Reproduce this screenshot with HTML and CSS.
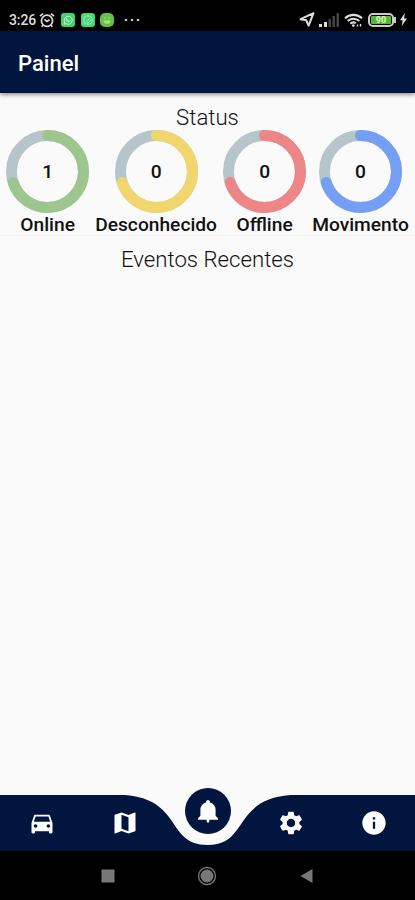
FILE: index.html
```html
<!DOCTYPE html>
<html lang="pt-BR">
<head>
<meta charset="UTF-8">
<meta name="viewport" content="width=device-width, initial-scale=1.0">
<title>Painel</title>
<link rel="stylesheet" href="styles.css">
</head>
<body>
<div class="status-bar">
    <div class="status-left">
        <span class="clock">3:26</span>
        <svg class="alarm" viewBox="0 0 16 16" fill="none" stroke="#ddd" stroke-width="1.7">
            <circle cx="8" cy="8.8" r="5.6"/>
            <path d="M1 4.2 4 1.6M15 4.2 12 1.6M5.5 7.3 8 9.5l2.6-1.7M4 13.2l-1.3 1.5M12 13.2l1.3 1.5"/>
        </svg>
        <svg class="app-icon" viewBox="0 0 14 14">
            <rect width="14" height="14" rx="3" fill="#43d36b"/>
            <path d="M3 11.2 3.6 9A4 4 0 1 1 5 10.6z" fill="none" stroke="#c9f5d4"/>
            <path d="M5.4 5c0 2 1.5 3.5 3.5 3.6" fill="none" stroke="#c9f5d4" stroke-width="1.3"/>
        </svg>
        <svg class="app-icon" viewBox="0 0 14 14">
            <rect width="14" height="14" rx="3" fill="#48d873"/>
            <rect x="3" y="3" width="8" height="8" rx="2.5" fill="none" stroke="#a5efba"/>
            <path d="M5 9.2 9.2 4.8M6 10.5 10 7" stroke="#a5efba"/>
        </svg>
        <svg class="app-icon" viewBox="0 0 14 14">
            <rect width="14" height="14" rx="5" fill="#62c043"/>
            <path d="M3.5 7.5h7a3.5 3.3 0 0 1-7 0z" fill="#a9df94"/>
            <path d="M5 3.8v2.4M9 3.8v2.4M7 7.5v3" stroke="#a9df94"/>
        </svg>
        <svg class="more" viewBox="0 0 16 4" fill="#c4c4c4">
            <circle cx="2" cy="2" r="1.3"/><circle cx="8" cy="2" r="1.3"/><circle cx="14" cy="2" r="1.3"/>
        </svg>
    </div>
    <div class="status-right">
        <svg class="location" viewBox="0 0 16 15" fill="none" stroke="#ddd" stroke-width="2" stroke-linejoin="round">
            <path d="M14.5 1.2 1.5 7.2 7.3 8.3 9.6 13.6z"/>
        </svg>
        <svg class="signal" viewBox="0 0 20 14">
            <path d="M0 11h3v3H0zM5 9h3v5H5z" fill="#ddd"/>
            <path d="M9.5 6H12v8H9.5zM13.5 3H16v11h-2.5zM17.5 0H20v14h-2.5z" fill="#444"/>
        </svg>
        <svg class="wifi" viewBox="0 0 19 14" fill="none" stroke="#ddd" stroke-width="2.1">
            <path d="M1 5.2a12.5 12.5 0 0 1 17 0M3.7 8a8.5 8.5 0 0 1 11.6 0M6.3 10.6a4.6 4.6 0 0 1 5.5-.5"/>
            <circle cx="9.3" cy="12.6" r="1.3" fill="#ddd" stroke="none"/>
            <path d="M13.5 13.5v-2M16.5 11v2.5" stroke-width="1.4"/>
        </svg>
        <div class="battery"><span>90</span></div>
        <svg class="bolt" viewBox="0 0 7 13" fill="#ddd"><path d="M4.8 0 0 7.2h2.6L1.8 13 7 5.4H4.2z"/></svg>
    </div>
</div>

<header class="app-bar">
    <h1>Painel</h1>
</header>

<main class="content">
    <section class="status">
        <h2>Status</h2>
        <div class="gauges">
            <div class="gauge online">
                <div class="dial">
                    <svg viewBox="0 0 83 83"><circle class="track" cx="41.5" cy="41.5" r="36"/><circle class="arc" cx="41.5" cy="41.5" r="36" pathLength="100"/></svg>
                    <span>1</span>
                </div>
                <div class="label">Online</div>
            </div>
            <div class="gauge unknown">
                <div class="dial">
                    <svg viewBox="0 0 83 83"><circle class="track" cx="41.5" cy="41.5" r="36"/><circle class="arc" cx="41.5" cy="41.5" r="36" pathLength="100"/></svg>
                    <span>0</span>
                </div>
                <div class="label">Desconhecido</div>
            </div>
            <div class="gauge offline">
                <div class="dial">
                    <svg viewBox="0 0 83 83"><circle class="track" cx="41.5" cy="41.5" r="36"/><circle class="arc" cx="41.5" cy="41.5" r="36" pathLength="100"/></svg>
                    <span>0</span>
                </div>
                <div class="label">Offline</div>
            </div>
            <div class="gauge moving">
                <div class="dial">
                    <svg viewBox="0 0 83 83"><circle class="track" cx="41.5" cy="41.5" r="36"/><circle class="arc" cx="41.5" cy="41.5" r="36" pathLength="100"/></svg>
                    <span>0</span>
                </div>
                <div class="label">Movimento</div>
            </div>
        </div>
    </section>
    <section class="events">
        <h2>Eventos Recentes</h2>
    </section>
</main>

<nav class="tab-bar">
    <!-- bar with the notch under the active tab -->
    <svg class="tab-shape" viewBox="0 0 415 56">
        <path d="M0 0H124.5C182.6 4.2 166 50 207.5 50S232.4 4.2 290.5 0H415V56H0z" fill="#01153e"/>
    </svg>
    <a class="tab"><svg viewBox="0 0 24 24"><path d="M18.92 6.01C18.72 5.42 18.16 5 17.5 5h-11c-.66 0-1.21.42-1.42 1.01L3 12v8c0 .55.45 1 1 1h1c.55 0 1-.45 1-1v-1h12v1c0 .55.45 1 1 1h1c.55 0 1-.45 1-1v-8l-2.08-5.99zM6.5 16c-.83 0-1.5-.67-1.5-1.5S5.67 13 6.5 13s1.5.67 1.5 1.5S7.33 16 6.5 16zm11 0c-.83 0-1.5-.67-1.5-1.5s.67-1.5 1.5-1.5 1.5.67 1.5 1.5-.67 1.5-1.5 1.5zM5 11l1.5-4.5h11L19 11H5z"/></svg></a>
    <a class="tab"><svg viewBox="0 0 24 24"><path d="M20.5 3l-.16.03L15 5.1 9 3 3.36 4.9c-.21.07-.36.25-.36.48V20.5c0 .28.22.5.5.5l.16-.03L9 18.9l6 2.1 5.64-1.9c.21-.07.36-.25.36-.48V3.5c0-.28-.22-.5-.5-.5zM15 19l-6-2.11V5l6 2.11V19z"/></svg></a>
    <a class="tab active"><span><svg viewBox="0 0 24 24"><path d="M12 22c.7 0 1.1-.6 1.1-1.5v-1h-2.2v1c0 .9.4 1.5 1.1 1.5zm6.5-6v-5c0-3.07-1.84-5.64-4.7-6.32C13.7 3.5 12.9 2.5 12 2.5s-1.7 1-1.8 2.18C7.33 5.36 5.5 7.92 5.5 11v5L3.5 18.2v1.2h17v-1.2l-2-2.2z"/></svg></span></a>
    <a class="tab"><svg viewBox="0 0 24 24"><path d="M19.14 12.94c.04-.3.06-.61.06-.94 0-.32-.02-.64-.07-.94l2.03-1.58c.18-.14.23-.41.12-.61l-1.92-3.32c-.12-.22-.37-.29-.59-.22l-2.39.96c-.5-.38-1.03-.7-1.62-.94l-.36-2.54c-.04-.24-.24-.41-.48-.41h-3.84c-.24 0-.43.17-.47.41l-.36 2.54c-.59.24-1.13.57-1.62.94l-2.39-.96c-.22-.08-.47 0-.59.22L2.74 8.87c-.12.21-.08.47.12.61l2.03 1.58c-.05.3-.09.63-.09.94s.02.64.07.94l-2.03 1.58c-.18.14-.23.41-.12.61l1.92 3.32c.12.22.37.29.59.22l2.39-.96c.5.38 1.03.7 1.62.94l.36 2.54c.05.24.24.41.48.41h3.84c.24 0 .44-.17.47-.41l.36-2.54c.59-.24 1.13-.56 1.62-.94l2.39.96c.22.08.47 0 .59-.22l1.92-3.32c.12-.22.07-.47-.12-.61l-2.01-1.58zM12 15.6c-1.98 0-3.6-1.62-3.6-3.6s1.62-3.6 3.6-3.6 3.6 1.62 3.6 3.6-1.62 3.6-3.6 3.6z"/></svg></a>
    <a class="tab"><svg viewBox="0 0 24 24"><path d="M12 2C6.48 2 2 6.48 2 12s4.48 10 10 10 10-4.48 10-10S17.52 2 12 2zm1 15h-2v-6h2v6zm0-8h-2V7h2v2z"/></svg></a>
</nav>

<div class="system-nav">
    <svg viewBox="0 0 20 20"><rect x="3.5" y="3.5" width="13" height="13" fill="#777"/></svg>
    <svg viewBox="0 0 20 20"><circle cx="10" cy="10" r="8.5" fill="none" stroke="#777" stroke-width="1.4"/><circle cx="10" cy="10" r="6.5" fill="#777"/></svg>
    <svg viewBox="0 0 20 20"><path d="M3.5 10 15.5 3v14z" fill="#777"/></svg>
</div>
</body>
</html>
```
FILE: styles.css
```css
* {
    box-sizing: border-box;
}
body {
    font-family: Roboto, "Liberation Sans", sans-serif;
    margin: 0;
    height: 900px;
    display: flex;
    flex-direction: column;
    overflow: hidden;
    background-color: #fafafa;
    color: #111;
}
svg {
    display: block;
}
h1, h2 {
    margin: 0;
}

/* Phone status bar */
.status-bar {
    height: 31px;
    padding: 8px 8px 0 9px;
    display: flex;
    justify-content: space-between;
    background-color: #000;
    color: #ddd;
}
.status-left, .status-right {
    display: flex;
    align-items: center;
    height: 23px;
}
.clock {
    width: 27px;
    font-size: 14px;
    font-weight: 500;
    letter-spacing: -0.1px;
}
.alarm {
    width: 16px;
    height: 16px;
    margin: 0 6px 0 3px;
}
.app-icon {
    width: 14px;
    height: 14px;
    margin-right: 5.5px;
}
.more {
    width: 16px;
    height: 4px;
    margin-left: 4px;
}
.location {
    width: 16px;
    height: 15px;
    margin-right: 4px;
}
.signal {
    width: 20px;
    height: 14px;
    margin-right: 5px;
}
.wifi {
    width: 19px;
    height: 14px;
    margin-right: 5px;
}
.battery {
    position: relative;
    width: 26px;
    height: 14px;
    margin-right: 6px;
    padding: 1px;
    border: 2px solid #ccc;
    border-radius: 5px;
}
.battery::after {
    content: "";
    position: absolute;
    right: -4px;
    top: 2px;
    width: 2px;
    height: 6px;
    background-color: #ccc;
}
.battery span {
    display: block;
    height: 8px;
    border-radius: 1px;
    background-color: #55b92b;
    color: #e4f6dc;
    font-size: 9px;
    font-weight: 700;
    line-height: 8px;
    text-align: center;
}
.bolt {
    width: 7px;
    height: 13px;
}

.app-bar {
    height: 62px;
    padding-left: 18px;
    display: flex;
    align-items: center;
    background-color: #01153e;
    color: #fff;
    box-shadow: 0 2px 4px rgba(0, 0, 0, 0.4);
    z-index: 1;
}
.app-bar h1 {
    padding-top: 2px;
    font-size: 22px;
    font-weight: 500;
}

/* Dashboard */
.content {
    flex: 1;
}
h2 {
    font-size: 22.2px;
    font-weight: 300;
    line-height: 26px;
    text-align: center;
}
.status {
    height: 143px;
    padding-top: 11px;
    border-bottom: 1px solid #f3f3f3;
}
.gauges {
    display: flex;
    justify-content: space-evenly;
}
.gauge {
    display: flex;
    flex-direction: column;
    align-items: center;
}
.dial {
    display: grid;
    place-items: center;
    width: 83px;
    height: 83px;
}
.dial svg, .dial span {
    grid-area: 1 / 1;
}
.dial svg {
    width: 83px;
    height: 83px;
    transform: rotate(-90deg);
}
.dial span, .label {
    font-size: 19.2px;
    font-weight: 500;
}
.label {
    line-height: 23px;
}
.track, .arc {
    fill: none;
    stroke-width: 11;
}
.track {
    stroke: #b5c5ca;
}
.arc {
    stroke-dasharray: 70 100;
    stroke-linecap: round;
}
.online .arc {
    stroke: #9dc68f;
}
.unknown .arc {
    stroke: #f0d66c;
}
.offline .arc {
    stroke: #ee8586;
}
.moving .arc {
    stroke: #749ff5;
}
.events {
    padding-top: 10px;
}

/* Bottom navigation */
.tab-bar {
    position: relative;
    height: 56px;
    display: grid;
    grid-template-columns: repeat(5, 1fr);
}
.tab-shape {
    position: absolute;
    inset: 0;
    width: 100%;
    height: 100%;
}
.tab {
    position: relative;
    display: flex;
    align-items: center;
    justify-content: center;
}
.tab svg {
    width: 28px;
    height: 28px;
    fill: #fff;
}
.tab.active span {
    display: grid;
    place-items: center;
    width: 46px;
    height: 46px;
    margin-top: -24px;
    border-radius: 50%;
    background-color: #01153e;
}
.system-nav {
    height: 49px;
    padding: 0 58px;
    display: grid;
    grid-template-columns: repeat(3, 1fr);
    place-items: center;
    background-color: #000;
}
.system-nav svg {
    width: 20px;
    height: 20px;
}
```
